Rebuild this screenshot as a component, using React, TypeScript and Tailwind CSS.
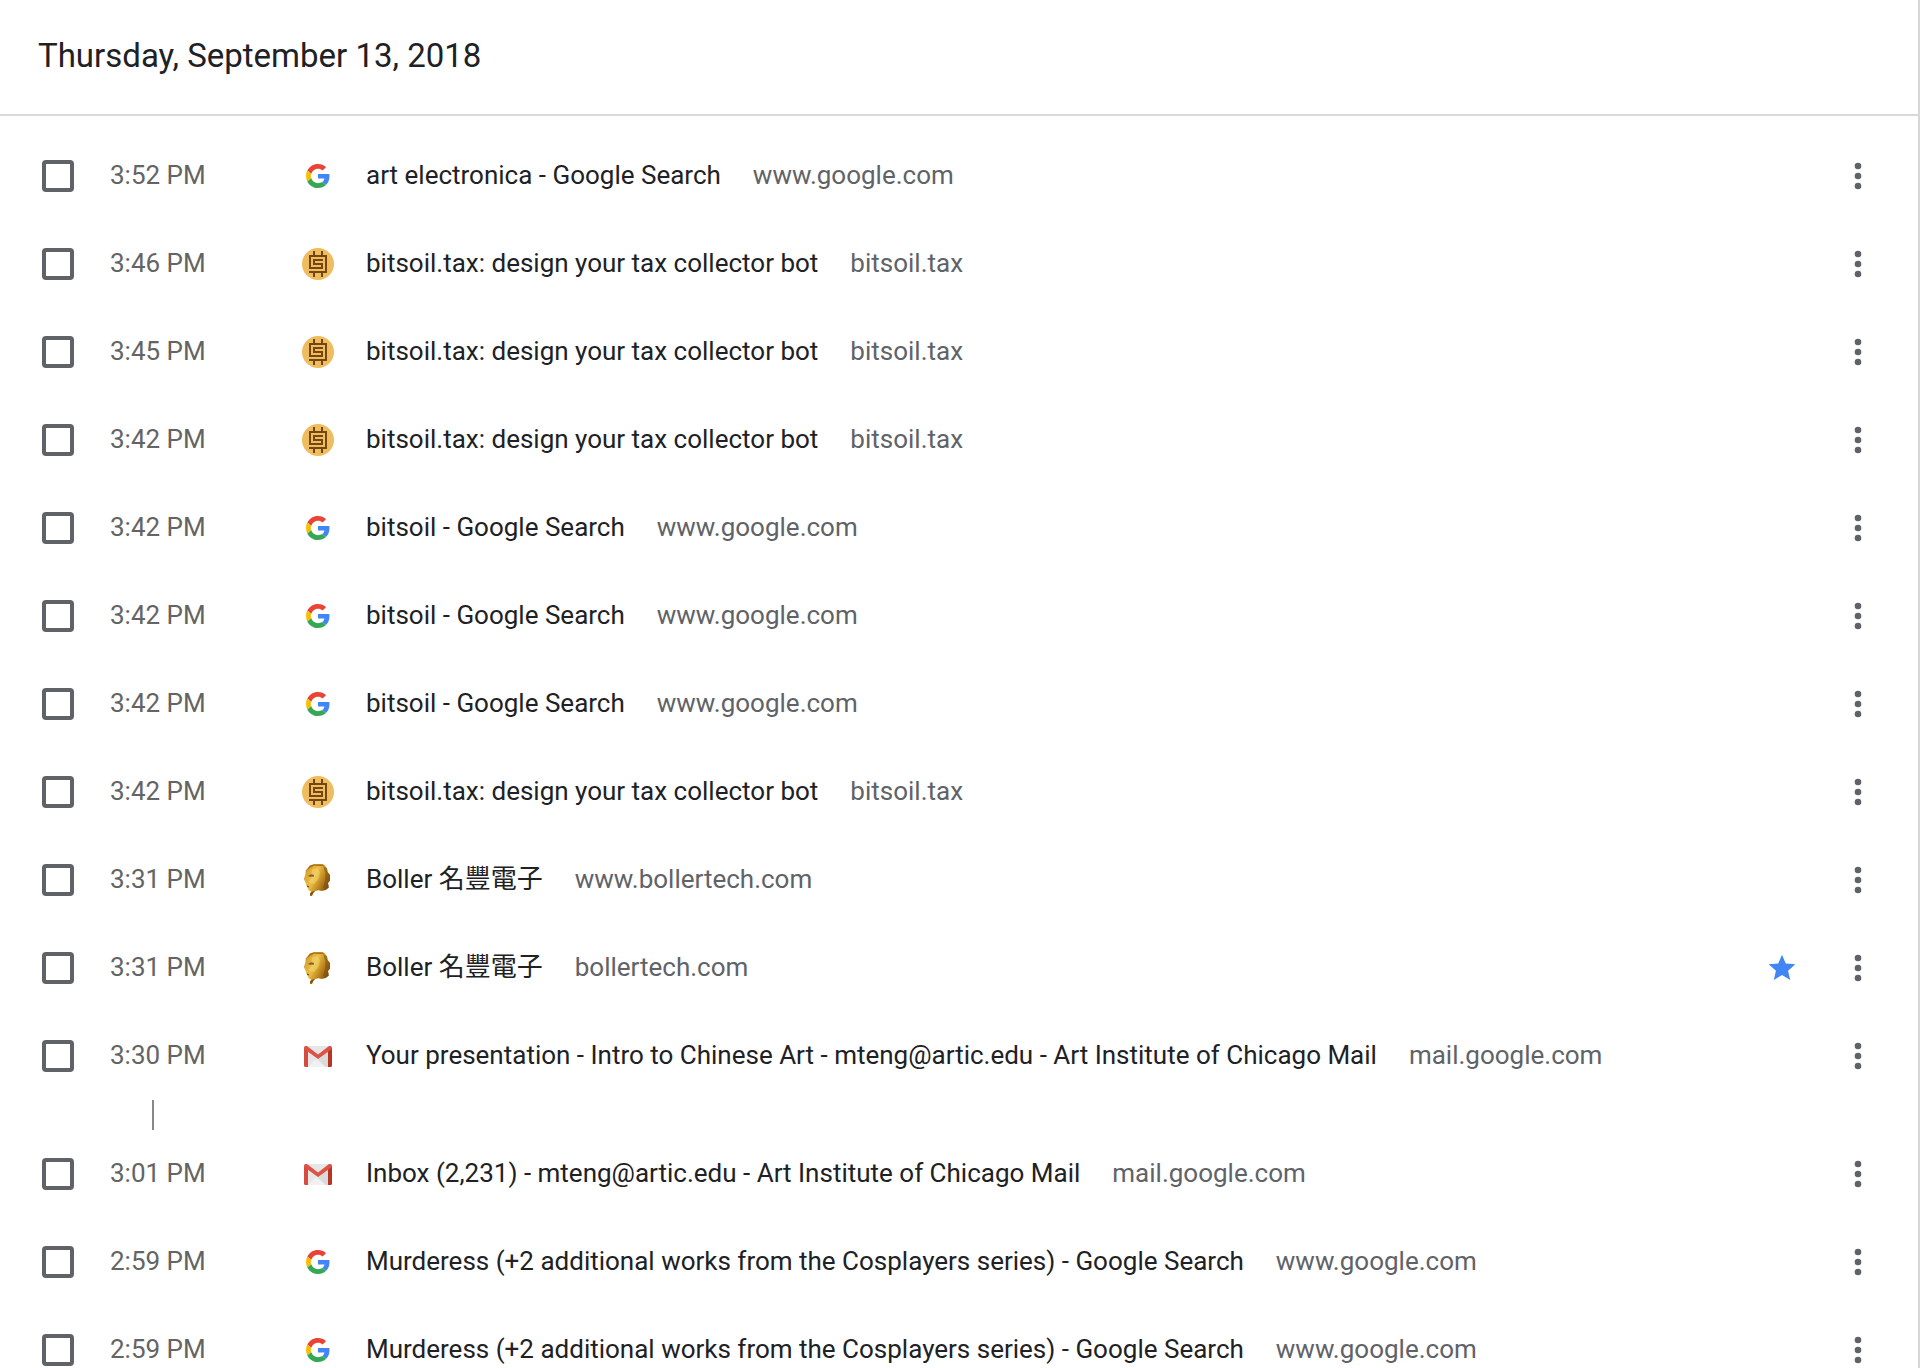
type Site = 'google' | 'bitsoil' | 'boller' | 'gmail';

interface Visit {
  time: string;
  site: Site;
  title: string;
  domain: string;
  starred?: boolean;
  gapAfter?: boolean;
}

const BOT = 'bitsoil.tax: design your tax collector bot';
const MURDERESS = 'Murderess (+2 additional works from the Cosplayers series) - Google Search';

const visits: Visit[] = [
  { time: '3:52 PM', site: 'google', title: 'art electronica - Google Search', domain: 'www.google.com' },
  { time: '3:46 PM', site: 'bitsoil', title: BOT, domain: 'bitsoil.tax' },
  { time: '3:45 PM', site: 'bitsoil', title: BOT, domain: 'bitsoil.tax' },
  { time: '3:42 PM', site: 'bitsoil', title: BOT, domain: 'bitsoil.tax' },
  { time: '3:42 PM', site: 'google', title: 'bitsoil - Google Search', domain: 'www.google.com' },
  { time: '3:42 PM', site: 'google', title: 'bitsoil - Google Search', domain: 'www.google.com' },
  { time: '3:42 PM', site: 'google', title: 'bitsoil - Google Search', domain: 'www.google.com' },
  { time: '3:42 PM', site: 'bitsoil', title: BOT, domain: 'bitsoil.tax' },
  { time: '3:31 PM', site: 'boller', title: 'Boller 名豐電子', domain: 'www.bollertech.com' },
  { time: '3:31 PM', site: 'boller', title: 'Boller 名豐電子', domain: 'bollertech.com', starred: true },
  {
    time: '3:30 PM',
    site: 'gmail',
    title: 'Your presentation - Intro to Chinese Art - mteng@artic.edu - Art Institute of Chicago Mail',
    domain: 'mail.google.com',
    gapAfter: true,
  },
  {
    time: '3:01 PM',
    site: 'gmail',
    title: 'Inbox (2,231) - mteng@artic.edu - Art Institute of Chicago Mail',
    domain: 'mail.google.com',
  },
  { time: '2:59 PM', site: 'google', title: MURDERESS, domain: 'www.google.com' },
  { time: '2:59 PM', site: 'google', title: MURDERESS, domain: 'www.google.com' },
];

function GoogleIcon() {
  return (
    <svg viewBox="0 0 48 48" className="m-1 size-6" aria-hidden="true">
      <path fill="#EA4335" d="M24 9.5c3.54 0 6.71 1.22 9.21 3.6l6.85-6.85C35.9 2.38 30.47 0 24 0 14.62 0 6.51 5.38 2.56 13.22l7.98 6.19C12.43 13.72 17.74 9.5 24 9.5z" />
      <path fill="#4285F4" d="M46.98 24.55c0-1.57-.15-3.09-.38-4.55H24v9.02h12.94c-.58 2.96-2.26 5.48-4.78 7.18l7.73 6c4.51-4.18 7.09-10.36 7.09-17.65z" />
      <path fill="#FBBC05" d="M10.53 28.59c-.48-1.45-.76-2.99-.76-4.59s.27-3.14.76-4.59l-7.98-6.19C.92 16.46 0 20.12 0 24c0 3.88.92 7.54 2.56 10.78l7.97-6.19z" />
      <path fill="#34A853" d="M24 48c6.48 0 11.93-2.13 15.89-5.81l-7.73-6c-2.15 1.45-4.92 2.3-8.16 2.3-6.26 0-11.57-4.22-13.47-9.91l-7.98 6.19C6.51 42.62 14.62 48 24 48z" />
    </svg>
  );
}

function BitsoilIcon() {
  return (
    <svg viewBox="0 0 32 32" className="size-8" aria-hidden="true">
      <circle cx="16" cy="16" r="16" fill="#EFBD5F" />
      <path
        d="M12 3v5M20 3v5M21 12h-9v4h8v4H8V8h16v16H7M12 24v5M20 24v5"
        fill="none"
        stroke="#744610"
        strokeWidth="2"
      />
    </svg>
  );
}

function BollerIcon() {
  return (
    <svg viewBox="0 0 32 32" className="size-8" aria-hidden="true">
      <defs>
        <linearGradient id="boller-gold" x1="4" y1="8" x2="28" y2="20" gradientUnits="userSpaceOnUse">
          <stop offset="0" stopColor="#D9A02C" />
          <stop offset="0.35" stopColor="#EBC04A" />
          <stop offset="0.65" stopColor="#C08A20" />
          <stop offset="1" stopColor="#84520F" />
        </linearGradient>
      </defs>
      <path
        fill="url(#boller-gold)"
        d="M8 1.500L12 .3h8.500l2.500 1.200 2 3 .6 3.500 2.400 3v5.500l-2 2.500.8 4.600-2.800 2.100L20 27l-3.500-.7-3.500.7-2 2.500-1 2.200H8v-2.200l1.500-1.800-2.900-1.400-2-4.700L3.400 18l-1.600-3 1.500-4 .4-4.500z"
      />
      <path fill="#B0721A" d="M3.700 7L8 1.500 12 .3h8.500L23 1.500l-4 .7-7-.4-4 2.200z" />
      <path fill="#F6D66B" opacity=".55" d="M10 5l5-1 3 4-1.500 7-4.500 5-5.500-1.500L9 14z" />
      <path fill="#7A4A0E" opacity=".5" d="M21 2l4 2.500.6 3.500 2.400 3v5.500L26 19l.8 4.600L23 26.500l-2-3 2-6.500.5-8z" />
      <path fill="#7D6440" d="M6.500 11.200l3-1 2.500.8v1.500l-2.500.3-3-.3z" />
      <path fill="#8A5512" d="M4.600 21.600l2.600.4v1.400l-2-.3zM9.500 27.700l3.500-.7-2 2.500-1 2.200H8v-2.200z" />
    </svg>
  );
}

function GmailIcon() {
  return (
    <svg viewBox="0 0 32 32" className="size-8" aria-hidden="true">
      <path fill="#E6E6E6" d="M4 6h24v21H4z" />
      <path fill="#D4D4D4" d="M26 10.500V27H23l-7-8z" opacity=".7" />
      <path fill="#F4F4F4" d="M14 19L6 27h18z" opacity=".8" />
      <path fill="#D54B3D" d="M2 8v17.500A1.500 1.500 0 003.500 27H6V9z" />
      <path fill="#B63524" d="M30 8v17.500a1.500 1.500 0 01-1.500 1.500H26V9z" />
      <path fill="#DE5145" d="M2 7.800C2 6.800 2.800 6 3.700 6H5l11 8.400L27 6h1.300c.9 0 1.700.8 1.700 1.800 0 .7-.3 1.200-.8 1.600L16 19 2.800 9.400C2.300 9 2 8.500 2 7.800z" />
    </svg>
  );
}

function SiteIcon({ site }: { site: Site }) {
  switch (site) {
    case 'google':
      return <GoogleIcon />;
    case 'bitsoil':
      return <BitsoilIcon />;
    case 'boller':
      return <BollerIcon />;
    case 'gmail':
      return <GmailIcon />;
  }
}

function VisitRow({ visit, id }: { visit: Visit; id: string }) {
  return (
    <li>
      <div className="flex h-22 items-center pr-10 pl-[42px]">
        <input
          id={id}
          type="checkbox"
          className="size-8 shrink-0 appearance-none rounded border-4 border-[#5f6368] checked:bg-[#4285f4]"
        />
        <label htmlFor={id} className="ml-9 w-48 shrink-0 pb-0.5 text-[#646464]">
          {visit.time}
        </label>
        <div className="shrink-0">
          <SiteIcon site={visit.site} />
        </div>
        <div className="ml-8 flex min-w-0 flex-1 items-center gap-8 pb-0.5 whitespace-nowrap">
          <a href="#" className="truncate text-[#202124]">
            {visit.title}
          </a>
          <span className="text-[#5f6368]">{visit.domain}</span>
        </div>
        {visit.starred && (
          <button type="button" aria-label="Remove bookmark" className="mr-10 shrink-0">
            <svg viewBox="0 0 24 24" className="size-8" fill="#4285F4" aria-hidden="true">
              <path d="M12 17.270L18.180 21l-1.640-7.030L22 9.240l-7.190-.61L12 2 9.190 8.630 2 9.240l5.460 4.730L5.820 21z" />
            </svg>
          </button>
        )}
        <button type="button" aria-label="More actions" className="shrink-0">
          <svg viewBox="0 0 24 24" className="size-10" fill="#5F6368" aria-hidden="true">
            <circle cx="12" cy="6" r="2" />
            <circle cx="12" cy="12" r="2" />
            <circle cx="12" cy="18" r="2" />
          </svg>
        </button>
      </div>
      {visit.gapAfter && <div className="ml-[152px] h-[30px] w-0.5 bg-[#888888]" />}
    </li>
  );
}

export default function App() {
  return (
    <main className="h-screen overflow-hidden border-r-2 border-[#d6d6d6] bg-white font-[Roboto,'Noto_Sans_CJK_TC',sans-serif] text-[26px] leading-8">
      <header className="flex h-29 items-center border-b-2 border-[#d9d9d9] px-[38px]">
        <h1 className="pb-0.5 text-[33px] leading-10 text-[#202124]">Thursday, September 13, 2018</h1>
      </header>
      <ul className="pt-4">
        {visits.map((visit, i) => (
          <VisitRow key={i} visit={visit} id={`visit-${i}`} />
        ))}
      </ul>
    </main>
  );
}
